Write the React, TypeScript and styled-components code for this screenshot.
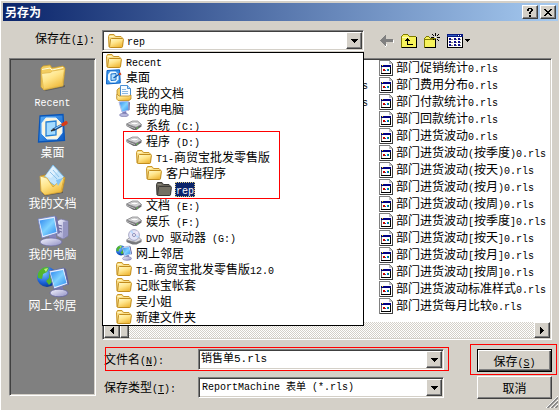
import React from "react";
import styled, { createGlobalStyle, css } from "styled-components";

const FACE = "#d4d0c8";
const NAVY = "#0a246a";
const CJK = `"Noto Sans CJK SC", sans-serif`;
const MONO = `"Liberation Mono", "Noto Sans CJK SC", monospace`;

const GlobalStyle = createGlobalStyle`
  * { box-sizing: border-box; }
  body { margin: 0; background: ${FACE}; color: #000; font: 12px/16px ${CJK}; }
  button, input, select { font: inherit; color: inherit; margin: 0; border-radius: 0; }
  ul { list-style: none; margin: 0; padding: 0; }
  svg { display: block; flex: none; }
`;

/* ---------- text ---------- */

const Latin = styled.span`
  font-family: ${MONO};
  font-size: 10px;
  line-height: 10px;
`;

function Text({ children, hotkey }: { children: string; hotkey?: string }) {
  const runs = children.match(/[\x20-\x7e]+|[^\x20-\x7e]+/g) || [];
  return (
    <>
      {runs.map((run, i) =>
        /[\x20-\x7e]/.test(run) ? (
          <Latin key={i}>
            {hotkey && run.includes(hotkey) ? (
              <>
                {run.slice(0, run.indexOf(hotkey))}
                <u>{hotkey}</u>
                {run.slice(run.indexOf(hotkey) + 1)}
              </>
            ) : (
              run
            )}
          </Latin>
        ) : (
          <React.Fragment key={i}>{run}</React.Fragment>
        )
      )}
    </>
  );
}

/* ---------- icons ---------- */

const DefsSvg = styled.svg`
  position: absolute;
`;

function Gradients() {
  return (
    <DefsSvg width="0" height="0" aria-hidden="true">
      <defs>
        <linearGradient id="gold" x1="0" y1="0" x2="0.6" y2="1">
          <stop offset="0" stopColor="#fffbd0" />
          <stop offset="0.5" stopColor="#ffe58a" />
          <stop offset="1" stopColor="#efb93a" />
        </linearGradient>
        <linearGradient id="screen" x1="0" y1="0" x2="1" y2="1">
          <stop offset="0" stopColor="#2f86ee" />
          <stop offset="0.5" stopColor="#7fd2ff" />
          <stop offset="1" stopColor="#2c8af0" />
        </linearGradient>
        <linearGradient id="shell" x1="0" y1="0" x2="1" y2="1">
          <stop offset="0" stopColor="#f5f5ff" />
          <stop offset="1" stopColor="#8f8fc4" />
        </linearGradient>
        <linearGradient id="blue" x1="0" y1="0" x2="1" y2="1">
          <stop offset="0" stopColor="#5ab0f8" />
          <stop offset="1" stopColor="#0b58c4" />
        </linearGradient>
        <radialGradient id="globe" cx="0.35" cy="0.3" r="0.8">
          <stop offset="0" stopColor="#7cc4ff" />
          <stop offset="0.6" stopColor="#1b62d8" />
          <stop offset="1" stopColor="#06307e" />
        </radialGradient>
      </defs>
    </DefsSvg>
  );
}

const SmallFolder = ({ open = false }: { open?: boolean }) => (
  <svg width="16" height="16" viewBox="0 0 16 16" aria-hidden="true">
    <path d="M.5 3.500l1-2h4.500l1.500 2h5.500l1 1v9.500h-13z" fill={open ? "#69655a" : "#fbe08a"} stroke={open ? "#3b3a36" : "#c8962a"} />
    <path d="M1.500 3.500h4" stroke={open ? "#8c897d" : "#fff6c2"} />
    <path d="M3.500 5.500h11q1 0 .9.900l-.9 7.200q-.1.900-1 .9h-11q-1 0-.9-.900l.9-7.200q.1-.900 1-.900z" fill={open ? "#747063" : "url(#gold)"} stroke={open ? "#3b3a36" : "#c18c1d"} />
  </svg>
);

const BigFolder = () => (
  <svg width="26" height="28" viewBox="0 0 26 28" aria-hidden="true">
    <path d="M3 26l22-5v2l-19 4z" fill="#4b4b4b" opacity=".6" />
    <path d="M1 4l2-2 7-1 2 3 11-2 2 2-2 18-19 4-3-3z" fill="#f3cd60" stroke="#c59a30" strokeWidth=".8" />
    <path d="M2 5.500l8-1.500 2 2 11-2.500" fill="none" stroke="#fffbd9" />
    <path d="M1.500 9.500l9-1 2-1.500 12-2-2.500 16.500-18.500 4z" fill="url(#gold)" stroke="#e0b64b" strokeWidth=".8" />
  </svg>
);

const DesktopIcon = ({ size }: { size: number }) => (
  <svg width={size} height={size} viewBox="0 0 32 32" aria-hidden="true">
    <path d="M3 3l23-1.500 1.500 26-26 1.500z" fill="url(#blue)" stroke="#0955b8" strokeWidth="1.300" />
    <path d="M9 5h10l6 6v9l-5 6h-10l-5-5V10z" fill="#fff6db" stroke="#e1f3ff" />
    <path d="M9 9l10-1v14l-10 1z" fill="#a5dcff" stroke="#2680d4" strokeWidth="1.300" />
    <path d="M16 17l11-6" stroke="#174b8c" strokeWidth="3" />
    <path d="M17 16l9-5" stroke="#82c6ff" strokeWidth="1.200" />
    <path d="M26 11.500l3-1.600" stroke="#d93b17" strokeWidth="3.500" strokeLinecap="round" />
    <path d="M14 18l4-2" stroke="#333" strokeWidth="1.500" />
  </svg>
);

const SmallDesktop = () => (
  <svg width="16" height="16" viewBox="0 0 16 16" aria-hidden="true">
    <path d="M1 1.500l12.500-.7.8 13.200-13.800 1z" fill="#3c94e8" stroke="#0b62c6" />
    <path d="M4.500 2.500h5l3 3v5l-3 3h-5l-2.500-3v-5z" fill="#eef9ff" />
    <path d="M5 5l5-.5v6.500l-5 .5z" fill="#b5e2ff" stroke="#1870cc" />
    <path d="M7.500 9l6-4" stroke="#0f5bb0" strokeWidth="1.500" />
    <path d="M13 5.500l2-1" stroke="#dc4a20" strokeWidth="2" />
  </svg>
);

const SmallDocs = () => (
  <svg width="16" height="16" viewBox="0 0 16 16" aria-hidden="true">
    <path d="M1 5l2-2h2v10H1z" fill="#f4cf62" stroke="#b8851e" strokeWidth=".8" />
    <path d="M4.500.5h7l3 3v9h-10z" fill="#f6fbff" stroke="#4a8fd2" />
    <path d="M11.500.5v3h3" fill="#b9ddfb" stroke="#4a8fd2" />
    <path d="M6 4.500h4M6 6.500h6M6 8.500h6" stroke="#8cb8e0" />
    <path d="M1 9l2 2h10l2-1v4l-2 1.500H2L.7 14z" fill="url(#gold)" stroke="#bd8a20" strokeWidth=".8" />
  </svg>
);

const BigDocs = () => (
  <svg width="30" height="32" viewBox="0 0 30 32" aria-hidden="true">
    <path d="M4 29l21-2v2l-18 3z" fill="#444" opacity=".6" />
    <path d="M3 12l8-2 3 2 11 0 2 2-3 14-18 2-3-4z" fill="#f1c64e" stroke="#be8c22" strokeWidth=".8" />
    <path d="M15 1l11 12-7 10-13-9z" fill="#c4e5fb" stroke="#79b9e6" />
    <path d="M15 2l5 5-7 7-6-2z" fill="#ebf7ff" opacity=".7" />
    <path d="M12 8l7 7M15 6l6 7" stroke="#8ec3ea" />
    <path d="M2 12l7 2 6 9 11-10-3 15-16 3-4-4z" fill="url(#gold)" stroke="#d4a538" strokeWidth=".8" />
    <path d="M18 16l7-2-5 8z" fill="#84c4f5" />
  </svg>
);

const SmallComputer = () => (
  <svg width="16" height="16" viewBox="0 0 16 16" aria-hidden="true">
    <path d="M6 10h4l1 4-4 1z" fill="#7c7cb8" />
    <ellipse cx="8" cy="14" rx="4.500" ry="1.700" fill="#b5b5dc" stroke="#7777aa" strokeWidth=".6" />
    <path d="M3 1l9-1 1 9-7 2z" fill="url(#screen)" stroke="#b4bce6" />
    <path d="M12.500.5l1.500 1-.5 7.500-1 .5z" fill="#6b70aa" />
  </svg>
);

const BigComputer = () => (
  <svg width="32" height="32" viewBox="0 0 32 32" aria-hidden="true">
    <path d="M20 6l4-2 7 2v15l-5 3-6-3z" fill="url(#shell)" stroke="#7c7ca8" strokeWidth=".8" />
    <path d="M26 7v16l5-3V6z" fill="#9696c2" />
    <path d="M21 10l4 1M21 13l4 1M21 16l4 1" stroke="#6c6c9c" />
    <path d="M12 20l7-1 1 8-7 1z" fill="#8585bd" />
    <ellipse cx="14" cy="27" rx="11" ry="4" fill="url(#shell)" stroke="#6d6da2" strokeWidth=".8" />
    <path d="M1 4l17-3 3 17-16 5z" fill="#e9eeff" stroke="#6d7dbd" strokeWidth=".8" />
    <path d="M2.500 5.500l14.500-2.500 2.500 14-13.500 4z" fill="url(#screen)" />
    <path d="M18 1l2 1 3 16-2 1z" fill="#7373ac" />
  </svg>
);

const NetworkIcon = ({ size }: { size: number }) => (
  <svg width={size} height={size} viewBox="0 0 32 32" aria-hidden="true">
    <circle cx="10" cy="11" r="10" fill="url(#globe)" />
    <path d="M3 4q5-5 9-2l-2 4-4 2-1 5-4-1q-1-5 2-8zM12 8l4-4 4 5-4 6-4 4-3-4 3-3z" fill="#53b52d" />
    <path d="M7 3l4-1-2 4z" fill="#c4ed84" />
    <path d="M19 20l6-1 2 7-7 1z" fill="#7b7bb4" />
    <ellipse cx="22" cy="27" rx="9" ry="3.800" fill="url(#shell)" stroke="#62629c" strokeWidth=".8" />
    <path d="M12 5l15-3 4 16-14 5z" fill="#e8eeff" stroke="#596baf" strokeWidth=".8" />
    <path d="M13.500 6.500l12.500-2.500 3.500 13-12 4z" fill="url(#screen)" />
    <path d="M27 2l2 1 3 15-1 1z" fill="#5e6099" />
  </svg>
);

const DriveIcon = () => (
  <svg width="16" height="16" viewBox="0 0 16 16" aria-hidden="true">
    <path d="M.5 7l6-3h5l4 3.500v2l-5 3.500h-3l-7-4z" fill="#68686b" />
    <path d="M.5 7l6-3h5l4 3.500-5.500 2.800z" fill="#d2d2d4" stroke="#8b8b8e" strokeWidth=".8" />
    <ellipse cx="8.500" cy="6.500" rx="3.400" ry="1.300" fill="#fff" stroke="#a9a9ab" strokeWidth=".5" />
    <path d="M1 8.500l8 3" stroke="#bcbcbf" />
    <path d="M10.500 11.500l1.500-1" stroke="#5edb45" />
  </svg>
);

const DvdIcon = () => (
  <svg width="16" height="16" viewBox="0 0 16 16" aria-hidden="true">
    <path d="M.5 11l4-3h8l3 3v2l-5 2.500h-4l-6-2.500z" fill="#77777b" />
    <path d="M.5 11l4-3h8l3 3-5.500 2.300z" fill="#dedee2" stroke="#8c8c91" strokeWidth=".6" />
    <circle cx="8" cy="6" r="5.400" fill="#e3e4f7" stroke="#9798ba" strokeWidth=".8" />
    <path d="M8 6L4 2.500 6 1zM8 6l5 1-1 2z" fill="#b8d8fb" />
    <path d="M8 6l3-4 1.500 1.500z" fill="#f6e8fa" />
    <circle cx="8" cy="6" r="1.500" fill="#fff" stroke="#7374a8" strokeWidth=".8" />
  </svg>
);

const ReportIcon = () => (
  <svg width="14" height="16" viewBox="0 0 14 16" shapeRendering="crispEdges" aria-hidden="true">
    <path d="M0 0h10l4 4v12H0z" fill="#808080" />
    <path d="M1 1h9v3h3v11H1z" fill="#fff" />
    <path d="M10 1v3h3z" fill="#c0c0c0" />
    <path d="M13 4h1v12H1v-1h12z" fill="#404040" />
    <path d="M2 5h10v9H2z" fill="#606060" />
    <path d="M11 6h1v8H2v-1h9z" fill="#000" />
    <path d="M2 5h10v2H2z" fill="#000080" />
    <path d="M3 5h1v1H3z" fill="#ffe600" />
    <path d="M3 7h8v6H3z" fill="#fff" />
    <path d="M4 9h2v2H4z" fill="#d00000" />
    <path d="M6 10h1v1H6zM9 10h1v1H9z" fill="#008080" />
    <path d="M8 9h1v2H8z" fill="#0060ff" />
    <path d="M9 9h1v1H9z" fill="#00a000" />
  </svg>
);

const DownCaret = () => (
  <svg width="7" height="4" viewBox="0 0 7 4" shapeRendering="crispEdges" aria-hidden="true">
    <path d="M0 0h7v1H6v1H5v1H4v1H3V3H2V2H1V1H0z" />
  </svg>
);

const SideCaret = ({ left = false }: { left?: boolean }) => (
  <svg width="4" height="7" viewBox="0 0 4 7" shapeRendering="crispEdges" aria-hidden="true">
    <path d={left ? "M4 0v7H3V6H2V5H1V4H0V3h1V2h1V1h1V0z" : "M0 0v7h1V6h1V5h1V4h1V3H3V2H2V1H1V0z"} />
  </svg>
);

const BackIcon = () => (
  <svg width="14" height="12" viewBox="0 0 14 12" shapeRendering="crispEdges" aria-hidden="true">
    <path d="M6 8h8V5h-1v3zM6 9h1v2H6zM5 10h1v2H5z" fill="#fff" />
    <path d="M0 5h1V4h1V3h1V2h1V1h1V0h1v4h7v3H6v4H5v-1H4V9H3V8H2V7H1V6H0z" fill="#808080" />
  </svg>
);

const UpIcon = () => (
  <svg width="16" height="14" viewBox="0 0 16 14" shapeRendering="crispEdges" aria-hidden="true">
    <path d="M0 2h1V1h1V0h5v1h1v1h7v12H0z" fill="#807c00" />
    <path d="M15 3h1v11H1v-1h14z" fill="#000" />
    <path d="M2 1h5v1h1v1h7v10H1V2h1z" fill="#f7f35c" />
    <path d="M1 3h7v1H1z" fill="#fdfbb4" />
    <path d="M6 4h1v1h1v1h1v1H7v3h5v1H6V7H4V6h1V5h1z" fill="#000" />
  </svg>
);

const NewFolderIcon = () => (
  <svg width="16" height="15" viewBox="0 0 16 15" shapeRendering="crispEdges" aria-hidden="true">
    <path d="M0 5h1V4h1V3h3v1h1v1h6v10H0z" fill="#807c00" />
    <path d="M11 6h1v9H1v-1h10z" fill="#000" />
    <path d="M2 4h3v1h1v1h5v8H1V5h1z" fill="#f7f35c" />
    <path d="M0 6h12v1H0z" fill="#807c00" />
    <path d="M11 0h1v3h-1zM11 6h1v3h-1zM7 4h3v1H7zM13 4h3v1h-3zM8 1h1v1H8zM9 2h1v1H9zM14 1h1v1h-1zM13 2h1v1h-1zM9 6h1v1H9zM13 6h1v1h-1zM14 7h1v1h-1z" fill="#000" />
    <path d="M11 4h1v1h-1z" fill="#fff" />
  </svg>
);

const ViewsIcon = () => (
  <svg width="16" height="14" viewBox="0 0 16 14" shapeRendering="crispEdges" aria-hidden="true">
    <path d="M0 0h16v14H0z" fill="#000" />
    <path d="M0 0h16v3H0z" fill="#0a1a80" />
    <path d="M1 1h9v1H1z" fill="#2c5cc0" />
    <path d="M11 1h1v1h-1zM13 1h1v1h-1z" fill="#fff" />
    <path d="M1 3h14v10H1z" fill="#fff" />
    <path d="M2 4h2v2H2zM7 4h2v2H7zM11 4h2v2h-2zM2 7h2v2H2zM7 7h2v2H7zM11 7h2v2h-2zM2 10h2v2H2zM7 10h2v2H7zM11 10h2v2h-2z" fill="#10108a" />
    <path d="M4 5h2v1H4zM9 5h1v1H9zM13 5h1v1h-1zM4 8h2v1H4zM9 8h1v1H9zM13 8h1v1h-1zM4 11h2v1H4zM9 11h1v1H9zM13 11h1v1h-1z" fill="#808080" />
  </svg>
);

const QuestionIcon = () => (
  <svg width="6" height="9" viewBox="0 0 6 9" shapeRendering="crispEdges" aria-hidden="true">
    <path d="M1 0h4v1h1v2H5v1H4v2H2V4h1V3h1V1H2v2H0V1h1zM2 7h2v2H2z" />
  </svg>
);

const CloseIcon = () => (
  <svg width="8" height="7" viewBox="0 0 8 7" shapeRendering="crispEdges" aria-hidden="true">
    <path d="M0 0h2v1h1v1h2V1h1V0h2v1H7v1H6v1H5v1h1v1h1v1h1v1H6V6H5V5H3v1H2v1H0V6h1V5h1V4h1V3H2V2H1V1H0z" />
  </svg>
);

const GripIcon = () => (
  <svg width="12" height="12" viewBox="0 0 12 12" aria-hidden="true">
    <path d="M0 12L12 0M4 12l8-8M8 12l4-4" stroke="#fff" />
    <path d="M1.500 12L12 1.500M5.500 12L12 5.500M9.500 12L12 9.500" stroke="#808080" strokeWidth="1.500" />
  </svg>
);

/* ---------- shared surfaces ---------- */

const raised = css`
  border: 1px solid;
  border-color: #fff #404040 #404040 #fff;
  box-shadow: inset -1px -1px #808080;
  background: ${FACE};
`;

const sunken = css`
  border: 1px solid;
  border-color: #808080 #fff #fff #808080;
  box-shadow: inset 1px 1px #404040, inset -1px -1px ${FACE};
  padding: 1px;
`;

const Dialog = styled.main`
  position: relative;
  min-height: 100vh;
  padding: 2px 1px 11px 2px;
  border: solid #fff;
  border-width: 1px 0 0 1px;
  background: ${FACE};
`;

const TitleBar = styled.header`
  display: flex;
  align-items: center;
  height: 18px;
  padding: 0 2px;
  background: linear-gradient(to right, ${NAVY}, #a6caf0);
`;

const Title = styled.h1`
  flex: 1;
  margin: 0;
  font-size: 12px;
  line-height: 16px;
  font-weight: 700;
  color: #fff;
`;

const GlyphButton = styled.button<{ $w?: number; $h?: number; $gap?: number }>`
  ${raised}
  flex: none;
  display: flex;
  align-items: center;
  justify-content: center;
  width: ${(p) => p.$w ?? 16}px;
  height: ${(p) => (p.$h ? `${p.$h}px` : "auto")};
  margin-left: ${(p) => p.$gap ?? 0}px;
  padding: 0;
`;

const Body = styled.div`
  display: grid;
  grid-template-columns: 87px minmax(0, 1fr);
  gap: 7px 6px;
  padding: 9px 6px 0;
`;

const LookInLabel = styled.label`
  padding-left: 26px;
  line-height: 16px;
  white-space: nowrap;
`;

const TopRow = styled.div`
  display: flex;
  gap: 16px;
  height: 21px;
`;

const LookIn = styled.div`
  position: relative;
  flex: 1;
`;

const ComboFace = styled.button`
  ${sunken}
  display: flex;
  width: 100%;
  height: 21px;
  background: #fff;
`;

const ComboValue = styled.span`
  flex: 1;
  display: flex;
  align-items: center;
  gap: 2px;
  padding-left: 4px;
`;

const ArrowFace = styled.span`
  ${raised}
  align-self: stretch;
  justify-self: end;
  display: flex;
  align-items: center;
  justify-content: center;
  width: 16px;
  pointer-events: none;
`;

const Menu = styled.ul`
  position: absolute;
  z-index: 2;
  top: 22px;
  left: 0;
  right: 0;
  border: 1px solid #000;
  background: #fff;
`;

const Option = styled.li<{ $level: number }>`
  display: flex;
  align-items: center;
  gap: 3px;
  height: 16px;
  padding-left: ${(p) => 3 + p.$level * 10}px;
  white-space: pre;
`;

const OptionText = styled.span<{ $selected?: boolean }>`
  padding: 0 1px;
  line-height: 14px;
  ${(p) =>
    p.$selected &&
    css`
      background: ${NAVY};
      color: #fff;
      outline: 1px dotted #d8c47a;
      outline-offset: -1px;
    `}
`;

const Mark = styled.span<{ $inset: string }>`
  position: absolute;
  z-index: 3;
  inset: ${(p) => p.$inset};
  border: 1px solid #f00;
  pointer-events: none;
`;

const Tools = styled.div`
  display: flex;
  align-items: center;
  gap: 7px;
  padding-right: 82px;
`;

const Tool = styled.button`
  display: flex;
  align-items: center;
  gap: 2px;
  padding: 0;
  border: 0;
  background: none;
`;

const Places = styled.nav`
  ${sunken}
  display: flex;
  flex-direction: column;
  gap: 5px;
  margin-bottom: 3px;
  padding-top: 3px;
  background: #808080;
`;

const Place = styled.button`
  display: flex;
  flex-direction: column;
  align-items: center;
  padding: 0;
  border: 0;
  background: none;
  color: #fff;
`;

const PlaceIcon = styled.span`
  display: flex;
  align-items: center;
  height: 32px;
`;

const PlaceName = styled.span`
  height: 14px;
  line-height: 14px;
`;

const Main = styled.div`
  display: flex;
  flex-direction: column;
  gap: 9px;
`;

const Files = styled.section`
  ${sunken}
  background: #fff;
`;

const Columns = styled.div`
  display: flex;
  gap: 11px;
  padding-bottom: 7px;
`;

const FileColumn = styled.ul<{ $width?: number }>`
  ${(p) => (p.$width ? `flex: none; width: ${p.$width}px;` : "flex: 1;")}
`;

const FileRow = styled.li`
  display: flex;
  align-items: flex-start;
  gap: 3px;
  height: 17px;
  line-height: 14px;
  white-space: nowrap;
`;

const ClippedRow = styled(FileRow)`
  justify-content: flex-end;
`;

const ScrollBar = styled.div`
  display: flex;
  height: 16px;
  background: repeating-conic-gradient(#fff 0 25%, ${FACE} 0 50%) 0 0 / 2px 2px;
`;

const Thumb = styled.span`
  ${raised}
  width: 9px;
  margin-right: auto;
`;

const Footer = styled.div`
  display: flex;
  gap: 33px;
`;

const Fields = styled.div`
  flex: 1;
  display: flex;
  flex-direction: column;
  gap: 7px;
`;

const FieldRow = styled.div`
  position: relative;
  display: flex;
  height: 21px;
`;

const FieldLabel = styled.label`
  width: 96px;
  padding-left: 2px;
  line-height: 20px;
`;

const FieldBox = styled.div`
  ${sunken}
  flex: 1;
  display: grid;
  grid-template-columns: minmax(0, 1fr) 16px;
  background: #fff;
`;

const NameInput = styled.input`
  width: 100%;
  padding: 0 1px;
  border: 0;
  outline: 0;
  background: none;
  font: 11px/15px ${MONO};
`;

const TypeSelect = styled.select`
  grid-area: 1 / 1 / 2 / 3;
  width: 100%;
  padding: 0 2px;
  border: 0;
  outline: 0;
  appearance: none;
  background: none;
  font: 10px/17px ${MONO};
`;

const TypeArrow = styled(ArrowFace)`
  grid-area: 1 / 2 / 2 / 3;
`;

const Actions = styled.div`
  flex: none;
  display: flex;
  flex-direction: column;
  gap: 4px;
  width: 75px;
`;

const ActionSlot = styled.div`
  position: relative;
`;

const ActionButton = styled.button<{ $default?: boolean }>`
  ${raised}
  display: block;
  width: 100%;
  height: 23px;
  padding: 0;
  line-height: 18px;
  ${(p) =>
    p.$default &&
    css`
      border-color: #000;
      box-shadow: inset 1px 1px #fff, inset -1px -1px #404040, inset -2px -2px #808080;
    `}
`;

const Grip = styled.div`
  position: absolute;
  right: 1px;
  bottom: 2px;
`;

/* ---------- data ---------- */

type Node = { name: string; level: number; icon: React.ReactNode; selected?: boolean };

const folders: Node[] = [
  { name: "Recent", level: 0, icon: <SmallFolder /> },
  { name: "桌面", level: 0, icon: <SmallDesktop /> },
  { name: "我的文档", level: 1, icon: <SmallDocs /> },
  { name: "我的电脑", level: 1, icon: <SmallComputer /> },
  { name: "系统 (C:)", level: 2, icon: <DriveIcon /> },
  { name: "程序 (D:)", level: 2, icon: <DriveIcon /> },
  { name: "T1-商贸宝批发零售版", level: 3, icon: <SmallFolder /> },
  { name: "客户端程序", level: 4, icon: <SmallFolder /> },
  { name: "rep", level: 5, icon: <SmallFolder open />, selected: true },
  { name: "文档 (E:)", level: 2, icon: <DriveIcon /> },
  { name: "娱乐 (F:)", level: 2, icon: <DriveIcon /> },
  { name: "DVD 驱动器 (G:)", level: 2, icon: <DvdIcon /> },
  { name: "网上邻居", level: 1, icon: <NetworkIcon size={16} /> },
  { name: "T1-商贸宝批发零售版12.0", level: 1, icon: <SmallFolder /> },
  { name: "记账宝帐套", level: 1, icon: <SmallFolder /> },
  { name: "吴小姐", level: 1, icon: <SmallFolder /> },
  { name: "新建文件夹", level: 1, icon: <SmallFolder /> },
];

const places = [
  { name: "Recent", icon: <BigFolder /> },
  { name: "桌面", icon: <DesktopIcon size={32} /> },
  { name: "我的文档", icon: <BigDocs /> },
  { name: "我的电脑", icon: <BigComputer /> },
  { name: "网上邻居", icon: <NetworkIcon size={32} /> },
];

const files = [
  "部门促销统计0.rls",
  "部门费用分布0.rls",
  "部门付款统计0.rls",
  "部门回款统计0.rls",
  "部门进货波动0.rls",
  "部门进货波动(按季度)0.rls",
  "部门进货波动(按天)0.rls",
  "部门进货波动(按月)0.rls",
  "部门进货波动(按周)0.rls",
  "部门进货波动[按季度]0.rls",
  "部门进货波动[按天]0.rls",
  "部门进货波动[按月]0.rls",
  "部门进货波动[按周]0.rls",
  "部门进货波动标准样式0.rls",
  "部门进货每月比较0.rls",
];

const clippedFiles = ["", "s", "s"];

export default function App() {
  return (
    <>
      <GlobalStyle />
      <Gradients />
      <Dialog>
        <TitleBar>
          <Title>另存为</Title>
          <GlyphButton $h={14} aria-label="帮助">
            <QuestionIcon />
          </GlyphButton>
          <GlyphButton $h={14} $gap={2} aria-label="关闭">
            <CloseIcon />
          </GlyphButton>
        </TitleBar>

        <Body>
          <LookInLabel htmlFor="look-in">
            <Text hotkey="I">保存在(I):</Text>
          </LookInLabel>
          <TopRow>
            <LookIn>
              <ComboFace id="look-in" type="button" aria-haspopup="listbox" aria-expanded="true">
                <ComboValue>
                  <SmallFolder />
                  <OptionText>
                    <Text>rep</Text>
                  </OptionText>
                </ComboValue>
                <ArrowFace>
                  <DownCaret />
                </ArrowFace>
              </ComboFace>
              <Menu role="listbox" aria-labelledby="look-in">
                {folders.map((f) => (
                  <Option key={f.name} $level={f.level} role="option" aria-selected={!!f.selected}>
                    {f.icon}
                    <OptionText $selected={f.selected}>
                      <Text>{f.name}</Text>
                    </OptionText>
                  </Option>
                ))}
                <Mark as="li" role="presentation" $inset="78px 83px 126px 20px" />
              </Menu>
            </LookIn>
            <Tools role="toolbar">
              <Tool aria-label="后退">
                <BackIcon />
              </Tool>
              <Tool aria-label="向上一级">
                <UpIcon />
              </Tool>
              <Tool aria-label="新建文件夹">
                <NewFolderIcon />
              </Tool>
              <Tool aria-label="查看">
                <ViewsIcon />
                <svg width="5" height="3" viewBox="0 0 5 3" shapeRendering="crispEdges" aria-hidden="true">
                  <path d="M0 0h5v1H4v1H3v1H2V2H1V1H0z" />
                </svg>
              </Tool>
            </Tools>
          </TopRow>

          <Places>
            {places.map((p) => (
              <Place key={p.name} type="button">
                <PlaceIcon>{p.icon}</PlaceIcon>
                <PlaceName>
                  <Text>{p.name}</Text>
                </PlaceName>
              </Place>
            ))}
          </Places>

          <Main>
            <Files>
              <Columns>
                <FileColumn>
                  {clippedFiles.map((f, i) => (
                    <ClippedRow key={i}>
                      <span>
                        <Text>{f}</Text>
                      </span>
                    </ClippedRow>
                  ))}
                </FileColumn>
                <FileColumn $width={171}>
                  {files.map((f) => (
                    <FileRow key={f}>
                      <ReportIcon />
                      <span>
                        <Text>{f}</Text>
                      </span>
                    </FileRow>
                  ))}
                </FileColumn>
              </Columns>
              <ScrollBar>
                <GlyphButton aria-label="向左滚动">
                  <SideCaret left />
                </GlyphButton>
                <Thumb />
                <GlyphButton aria-label="向右滚动">
                  <SideCaret />
                </GlyphButton>
              </ScrollBar>
            </Files>

            <Footer>
              <Fields>
                <FieldRow>
                  <FieldLabel htmlFor="file-name">
                    <Text hotkey="N">文件名(N):</Text>
                  </FieldLabel>
                  <FieldBox>
                    <NameInput id="file-name" defaultValue="销售单5.rls" />
                    <GlyphButton aria-label="文件名列表">
                      <DownCaret />
                    </GlyphButton>
                  </FieldBox>
                  <Mark $inset="-2px -5px -1px 3px" />
                </FieldRow>
                <FieldRow>
                  <FieldLabel htmlFor="file-type">
                    <Text hotkey="T">保存类型(T):</Text>
                  </FieldLabel>
                  <FieldBox>
                    <TypeSelect id="file-type">
                      <option>ReportMachine 表单 (*.rls)</option>
                    </TypeSelect>
                    <TypeArrow>
                      <DownCaret />
                    </TypeArrow>
                  </FieldBox>
                </FieldRow>
              </Fields>
              <Actions>
                <ActionSlot>
                  <ActionButton $default type="button">
                    <Text hotkey="S">保存(S)</Text>
                  </ActionButton>
                  <Mark $inset="-5px -5px -3px -7px" />
                </ActionSlot>
                <ActionButton type="button">取消</ActionButton>
              </Actions>
            </Footer>
          </Main>
        </Body>
        <Grip>
          <GripIcon />
        </Grip>
      </Dialog>
    </>
  );
}
